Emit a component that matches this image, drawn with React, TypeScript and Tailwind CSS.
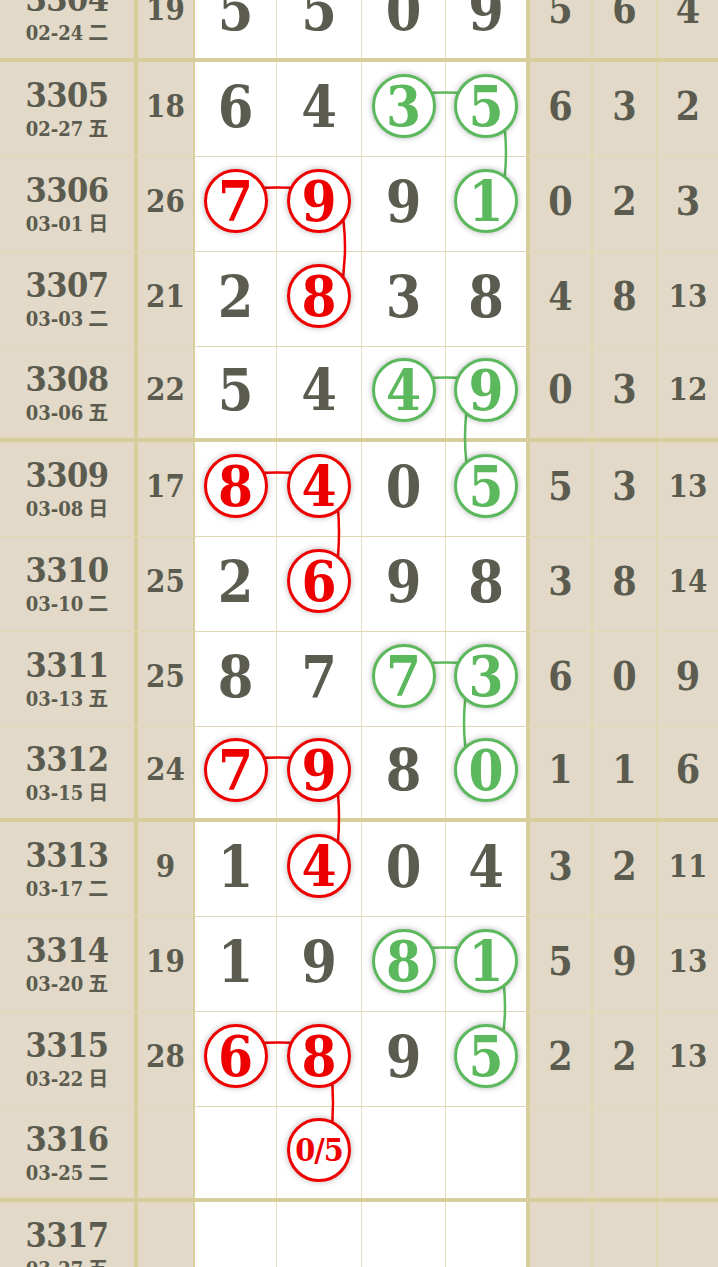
import React from 'react';

type Mark = '' | 'r' | 'g';

type Row = {
  n: string;
  d: string;
  w: string;
  s: string;
  v: string[];
  m: Mark[];
  r: string[];
};

const rows: Row[] = [
  { n: '3304', d: '02-24', w: '二', s: '19', v: ['5', '5', '0', '9'], m: ['', '', '', ''], r: ['5', '6', '4'] },
  { n: '3305', d: '02-27', w: '五', s: '18', v: ['6', '4', '3', '5'], m: ['', '', 'g', 'g'], r: ['6', '3', '2'] },
  { n: '3306', d: '03-01', w: '日', s: '26', v: ['7', '9', '9', '1'], m: ['r', 'r', '', 'g'], r: ['0', '2', '3'] },
  { n: '3307', d: '03-03', w: '二', s: '21', v: ['2', '8', '3', '8'], m: ['', 'r', '', ''], r: ['4', '8', '13'] },
  { n: '3308', d: '03-06', w: '五', s: '22', v: ['5', '4', '4', '9'], m: ['', '', 'g', 'g'], r: ['0', '3', '12'] },
  { n: '3309', d: '03-08', w: '日', s: '17', v: ['8', '4', '0', '5'], m: ['r', 'r', '', 'g'], r: ['5', '3', '13'] },
  { n: '3310', d: '03-10', w: '二', s: '25', v: ['2', '6', '9', '8'], m: ['', 'r', '', ''], r: ['3', '8', '14'] },
  { n: '3311', d: '03-13', w: '五', s: '25', v: ['8', '7', '7', '3'], m: ['', '', 'g', 'g'], r: ['6', '0', '9'] },
  { n: '3312', d: '03-15', w: '日', s: '24', v: ['7', '9', '8', '0'], m: ['r', 'r', '', 'g'], r: ['1', '1', '6'] },
  { n: '3313', d: '03-17', w: '二', s: '9', v: ['1', '4', '0', '4'], m: ['', 'r', '', ''], r: ['3', '2', '11'] },
  { n: '3314', d: '03-20', w: '五', s: '19', v: ['1', '9', '8', '1'], m: ['', '', 'g', 'g'], r: ['5', '9', '13'] },
  { n: '3315', d: '03-22', w: '日', s: '28', v: ['6', '8', '9', '5'], m: ['r', 'r', '', 'g'], r: ['2', '2', '13'] },
  { n: '3316', d: '03-25', w: '二', s: '', v: ['', '0/5', '', ''], m: ['', 'r', '', ''], r: ['', '', ''] },
  { n: '3317', d: '03-27', w: '五', s: '', v: ['', '', '', ''], m: ['', '', '', ''], r: ['', '', ''] },
];

const RED = '#ee0000';
const GREEN = '#5cb85c';
const ROW_H = 95;
const colX = [236, 320, 404, 487];
// circles sit a few px above the row middle
const cy = (i: number) => i * ROW_H + 43;

// connectors between circled numbers
type Link =
  | { c: string; t: 'h'; row: number; col: number }
  | { c: string; t: 'v'; row: number; col: number; dx: number; b: number };

const links: Link[] = [
  { c: GREEN, t: 'h', row: 1, col: 2 },
  { c: GREEN, t: 'v', row: 1, col: 3, dx: 14, b: 5 },
  { c: RED, t: 'h', row: 2, col: 0 },
  { c: RED, t: 'v', row: 2, col: 1, dx: 20, b: 5 },
  { c: GREEN, t: 'h', row: 4, col: 2 },
  { c: GREEN, t: 'v', row: 4, col: 3, dx: -17, b: -5 },
  { c: RED, t: 'h', row: 5, col: 0 },
  { c: RED, t: 'v', row: 5, col: 1, dx: 15, b: 4 },
  { c: GREEN, t: 'h', row: 7, col: 2 },
  { c: GREEN, t: 'v', row: 7, col: 3, dx: -18, b: -5 },
  { c: RED, t: 'h', row: 8, col: 0 },
  { c: RED, t: 'v', row: 8, col: 1, dx: 15, b: 4 },
  { c: GREEN, t: 'h', row: 10, col: 2 },
  { c: GREEN, t: 'v', row: 10, col: 3, dx: 13, b: 5 },
  { c: RED, t: 'h', row: 11, col: 0 },
  { c: RED, t: 'v', row: 11, col: 1, dx: 10, b: 3 },
];

const serif = { fontFamily: '"DejaVu Serif", "Noto Sans CJK SC", serif' };

function Circle({ mark, text }: { mark: Mark; text: string }) {
  const small = text.length > 1;
  return (
    <div
      className={`relative z-10 flex h-[64px] w-[64px] items-center justify-center rounded-full border-[3px] bg-white shadow-[0_0_6px_rgba(0,0,0,0.3)] ${
        mark === 'r' ? 'border-[#ee0000] text-[#ee0000]' : 'border-[#5cb85c] text-[#5cb85c]'
      }`}
    >
      <span
        className={`font-bold leading-none [font-stretch:condensed] ${small ? 'text-[32px] tracking-[-1px]' : 'text-[56px]'}`}
        style={serif}
      >
        {text}
      </span>
    </div>
  );
}

export default function App() {
  return (
    <div className="h-[1267px] w-[718px] overflow-hidden bg-[#e2d9c8] text-[#5b5c4f]" style={serif}>
      <div className="relative mt-[-33px]">
        {rows.map((row, i) => {
          const thick = i % 4 === 0;
          const bb = thick ? 'border-b-4 border-b-[#d8ce9c]' : 'border-b border-b-[#e0d8b2]';
          return (
            <div key={row.n} className={`flex h-[95px] ${bb}`}>
              <div className="flex w-[138px] shrink-0 flex-col items-center justify-center border-r-4 border-r-[#d8ce9c]">
                <div className="text-[34px] font-bold leading-[36px] tracking-[-0.5px] [font-stretch:condensed]">{row.n}</div>
                <div className="mt-[4px] text-[20px] font-bold leading-[24px] [font-stretch:condensed]">
                  {row.d}
                  <span className="ml-[5px] text-[20px]">{row.w}</span>
                </div>
              </div>
              <div className="flex w-[57px] shrink-0 items-center justify-center border-r-2 border-r-[#d8ce9c] pb-[6px] text-[31px] font-bold [font-stretch:condensed]">
                {row.s}
              </div>
              {row.v.map((v, c) => (
                <div
                  key={c}
                  className={`flex shrink-0 items-center justify-center bg-white pb-[6px] ${
                    c === 0 ? 'w-[82px] border-r border-r-[#e6dfbd]' : c === 1 ? 'w-[85px] border-r border-r-[#e6dfbd]' : c === 2 ? 'w-[84px] border-r border-r-[#e6dfbd]' : 'w-[84px] border-r-4 border-r-[#d8ce9c]'
                  }`}
                >
                  {row.m[c] ? (
                    <Circle mark={row.m[c]} text={v} />
                  ) : (
                    <span className="text-[57px] font-bold leading-none [font-stretch:condensed]">{v}</span>
                  )}
                </div>
              ))}
              {row.r.map((v, c) => (
                <div
                  key={c}
                  className={`flex shrink-0 items-center justify-center pb-[6px] font-bold leading-none [font-stretch:condensed] ${
                    c === 0 ? 'w-[63px] border-r-2 border-r-[#e0d8b2]' : c === 1 ? 'w-[65px] border-r-2 border-r-[#e0d8b2]' : 'w-[60px]'
                  } ${v.length > 1 ? 'text-[31px]' : 'text-[39px]'}`}
                >
                  {v}
                </div>
              ))}
            </div>
          );
        })}
        <svg className="pointer-events-none absolute left-0 top-0 z-0" width={718} height={rows.length * ROW_H}>
          {links.map((l, k) => {
            const y = cy(l.row);
            if (l.t === 'h') {
              const x1 = colX[l.col];
              const x2 = colX[l.col + 1];
              return (
                <path
                  key={k}
                  d={`M ${x1} ${y - 11} Q ${(x1 + x2) / 2} ${y - 14} ${x2} ${y - 11}`}
                  stroke={l.c}
                  strokeWidth={2.5}
                  fill="none"
                />
              );
            }
            const x = colX[l.col] + l.dx;
            return (
              <path
                key={k}
                d={`M ${x} ${y} Q ${x + l.b * 2} ${y + ROW_H / 2} ${x} ${y + ROW_H}`}
                stroke={l.c}
                strokeWidth={2.5}
                fill="none"
              />
            );
          })}
        </svg>
      </div>
    </div>
  );
}
